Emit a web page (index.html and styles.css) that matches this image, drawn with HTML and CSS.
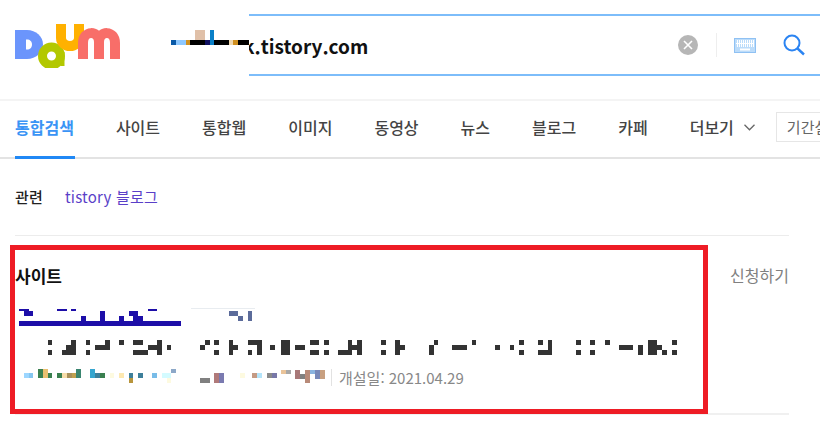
FILE: index.html
```html
<!DOCTYPE html>
<html lang="ko">
<head>
    <meta charset="UTF-8">
    <title>k.tistory.com - Daum 검색</title>
    <link rel="stylesheet" href="styles.css">
</head>
<body>
    <!-- 상단 검색 영역 -->
    <header class="top-bar">
        <svg class="logo" width="107" height="44" viewBox="14 24 107 44">
            <path d="M15 30h12c9 0 16 6.500 16 14.500S36 59 27 59H15z" fill="#6b95fc"/>
            <path d="M26 39.500h1c3 0 5 2 5 5s-2 5-5 5h-1z" fill="#fff"/>
            <circle cx="51.500" cy="56" r="9" fill="none" stroke="#b3c800" stroke-width="9"/>
            <path d="M62.500 52v14" stroke="#b3c800" stroke-width="4"/>
            <path d="M61 24v14a9 8 0 0 0 18 0V24" fill="none" stroke="#ffb100" stroke-width="10"/>
            <path d="M83 59V43c0-13 16-13 16-1v17M99 42c0-12 16-12 16 1v16" fill="none" stroke="#f86e69" stroke-width="10"/>
        </svg>
        <svg class="top-mosaic" width="78" height="16" viewBox="171 30 78 16">
            <rect x="171" y="40" width="5" height="5" fill="#0a5aa8"/>
            <rect x="176" y="40" width="10" height="5" fill="#8ec8ff"/>
            <rect x="186" y="40" width="4" height="5" fill="#d09020"/>
            <rect x="190" y="40" width="15" height="5" fill="#000"/>
            <rect x="195" y="30" width="10" height="10" fill="#e0c0a8"/>
            <rect x="205" y="40" width="5" height="5" fill="#101060"/>
            <rect x="210" y="30" width="4" height="15" fill="#0a80c8"/>
            <rect x="214" y="40" width="15" height="5" fill="#000"/>
            <rect x="229" y="40" width="4" height="5" fill="#f0d8b0"/>
            <rect x="233" y="40" width="5" height="5" fill="#d09020"/>
            <rect x="238" y="40" width="11" height="5" fill="#000"/>
        </svg>
        <div class="search-box">
            <span class="query">k.tistory.com</span>
            <svg class="icon-clear" width="20" height="20" viewBox="0 0 20 20">
                <circle cx="10" cy="10" r="10" fill="#b6b6b6"/>
                <path d="M6 6l8 8M14 6l-8 8" stroke="#fff" stroke-width="1.600"/>
            </svg>
            <span class="search-divider"></span>
            <svg class="icon-keyboard" width="22" height="15" viewBox="0 0 22 15">
                <rect x=".5" y=".5" width="21" height="14" fill="#bcdcfa" stroke="#8fc1f3"/>
                <path d="M3.500 2v7M5.500 2v7M7.500 2v7M9.500 2v7M11.500 2v7M13.500 2v7M15.500 2v7M17.500 2v7M19.500 2v7" stroke="#fff"/>
                <path d="M2 5.500h18" stroke="#fff" stroke-width="1"/>
                <path d="M6 11.500h10" stroke="#fff" stroke-width="2"/>
            </svg>
            <svg class="icon-search" width="22" height="22" viewBox="0 0 22 22">
                <circle cx="9" cy="9" r="7.500" fill="none" stroke="#2b84f2" stroke-width="2"/>
                <path d="M14.500 14.500l6.500 6" stroke="#2b84f2" stroke-width="2.400"/>
            </svg>
        </div>
    </header>

    <!-- 메뉴 -->
    <nav class="tabs">
        <a class="tab active" href="#">통합검색</a>
        <a class="tab" href="#">사이트</a>
        <a class="tab" href="#">통합웹</a>
        <a class="tab" href="#">이미지</a>
        <a class="tab" href="#">동영상</a>
        <a class="tab" href="#">뉴스</a>
        <a class="tab" href="#">블로그</a>
        <a class="tab" href="#">카페</a>
        <a class="tab" href="#">더보기
            <svg width="11" height="7" viewBox="0 0 11 7"><path d="M.5 .8l5 5 5-5" fill="none" stroke="#666" stroke-width="1.300"/></svg>
        </a>
        <span class="period">기간설정</span>
    </nav>

    <main class="content">
        <div class="related">
            <strong>관련</strong>
            <a href="#">tistory 블로그</a>
        </div>

        <section class="site-section">
            <div class="section-head">
                <h2>사이트</h2>
                <a href="#">신청하기</a>
            </div>

            <svg class="title-mosaic" width="240" height="19" viewBox="19 308 240 19">
                <path fill="#1d0ea8" d="M19 321h162v5H19zM19 309h10v2H19zM24 311h9v5h-9zM57 309h10v2H57zM71 309h5v2h-5zM81 316h5v5h-5zM100 311h5v10h-5zM119 316h5v5h-5zM129 311h9v5h-9zM133 316h10v5h-10zM148 309h9v2h-9z"/>
                <path fill="#e8ecf0" d="M191 308h64v1h-64z"/>
                <path fill="#5b6b9a" d="M229 311h9v5h-9zM238 316h5v5h-5zM248 311h4v10h-4z"/>
            </svg>

            <svg class="desc-mosaic" width="630" height="15" viewBox="48 340 630 15">
                <path fill="#333" d="M48 340h4v5h-4zM48 350h4v5h-4zM71 340h5v15h-5zM62 350h9v5h-9zM66 345h5v5h-5zM86 340h4v5h-4zM86 350h4v5h-4zM95 345h15v5H95zM105 340h5v5h-5zM119 340h5v5h-5zM133 340h10v5h-10zM133 350h15v5h-15zM157 340h5v15h-5zM148 345h9v5h-9zM167 345h4v5h-4zM200 345h5v5h-5zM205 340h5v5h-5zM214 340h5v5h-5zM214 350h5v5h-5zM229 340h4v5h-4zM229 345h9v5h-9zM229 350h4v5h-4zM248 340h14v5h-14zM248 350h4v5h-4zM257 345h5v10h-5zM270 345h5v5h-5zM281 340h9v15h-9zM295 345h10v5h-10zM310 340h9v5h-9zM310 350h9v5h-9zM324 340h5v5h-5zM324 350h5v5h-5zM338 350h14v5h-14zM348 340h4v10h-4zM352 345h10v5h-10zM357 340h5v5h-5zM357 350h5v5h-5zM381 340h5v5h-5zM381 350h5v5h-5zM395 340h5v15h-5zM400 345h5v5h-5zM429 345h5v10h-5zM434 340h4v5h-4zM452 345h15v5h-15zM472 340h4v5h-4zM495 345h5v5h-5zM510 345h4v5h-4zM519 340h5v5h-5zM519 350h5v5h-5zM538 340h5v5h-5zM538 350h14v5h-14zM548 340h4v10h-4zM576 340h5v5h-5zM576 350h5v5h-5zM590 340h5v5h-5zM590 350h5v5h-5zM605 340h5v5h-5zM619 345h14v5h-14zM638 345h5v10h-5zM648 340h9v15h-9zM657 345h5v5h-5zM662 350h5v5h-5zM672 340h5v5h-5zM672 350h5v5h-5z"/>
            </svg>

            <div class="meta">
                <svg width="305" height="17" viewBox="24 369 305 17">
                    <rect x="24" y="373" width="5" height="5" fill="#9cd6ff"/>
                    <rect x="29" y="373" width="4" height="5" fill="#86c6f0"/>
                    <rect x="38" y="369" width="5" height="9" fill="#3a8050"/>
                    <rect x="43" y="369" width="5" height="9" fill="#eac070"/>
                    <rect x="48" y="373" width="4" height="5" fill="#3a8050"/>
                    <rect x="57" y="373" width="5" height="5" fill="#3a8050"/>
                    <rect x="62" y="373" width="5" height="5" fill="#f6dca8"/>
                    <rect x="67" y="373" width="5" height="5" fill="#a8905a"/>
                    <rect x="72" y="373" width="4" height="5" fill="#c0a050"/>
                    <rect x="76" y="369" width="5" height="9" fill="#3a8570"/>
                    <rect x="90" y="369" width="5" height="9" fill="#36a6d0"/>
                    <rect x="95" y="373" width="5" height="5" fill="#3d7f9a"/>
                    <rect x="100" y="373" width="5" height="5" fill="#3a8050"/>
                    <rect x="110" y="373" width="4" height="5" fill="#fdfae0"/>
                    <rect x="119" y="373" width="5" height="5" fill="#fde8b0"/>
                    <rect x="129" y="373" width="4" height="5" fill="#3d7f9a"/>
                    <rect x="129" y="378" width="4" height="5" fill="#b8953c"/>
                    <rect x="138" y="373" width="5" height="5" fill="#3d7f9a"/>
                    <rect x="152" y="373" width="5" height="5" fill="#78bce8"/>
                    <rect x="162" y="373" width="9" height="5" fill="#d4fbff"/>
                    <rect x="167" y="378" width="4" height="5" fill="#fdfae0"/>
                    <rect x="171" y="369" width="5" height="4" fill="#8ca8c8"/>
                    <rect x="200" y="378" width="10" height="5" fill="#808080"/>
                    <rect x="214" y="373" width="5" height="10" fill="#b07a7a"/>
                    <rect x="219" y="373" width="5" height="10" fill="#7a7ab0"/>
                    <rect x="240" y="373" width="5" height="5" fill="#fdfae0"/>
                    <rect x="252" y="373" width="5" height="5" fill="#c49a84"/>
                    <rect x="257" y="373" width="5" height="5" fill="#b4e4fa"/>
                    <rect x="267" y="373" width="5" height="5" fill="#8a8a8a"/>
                    <rect x="272" y="373" width="5" height="5" fill="#7878a8"/>
                    <rect x="281" y="370" width="5" height="4" fill="#eac49a"/>
                    <rect x="286" y="370" width="5" height="4" fill="#a8a8a8"/>
                    <rect x="295" y="370" width="5" height="9" fill="#a87878"/>
                    <rect x="300" y="374" width="5" height="5" fill="#808080"/>
                    <rect x="305" y="370" width="5" height="13" fill="#b88a78"/>
                    <rect x="310" y="370" width="5" height="4" fill="#8ab4e0"/>
                    <rect x="315" y="370" width="5" height="9" fill="#7888b8"/>
                    <rect x="320" y="370" width="5" height="9" fill="#c8a080"/>
                </svg>
                <span class="meta-divider"></span>
                <span>개설일: 2021.04.29</span>
            </div>
        </section>

        <!-- 빨간 강조 박스 -->
        <div class="highlight"></div>
    </main>
</body>
</html>
```

FILE: styles.css
```css
* {
    margin: 0;
    padding: 0;
    box-sizing: border-box;
}

html, body {
    height: 434px;
    overflow: hidden;
}

body {
    font-family: 'Noto Sans CJK KR', 'Noto Sans', sans-serif;
    color: #333;
    background: #fff;
    position: relative;
}

a {
    color: inherit;
    text-decoration: none;
}

svg {
    display: block;
    flex: none;
}

/* 상단 검색 영역 */
.top-bar {
    height: 101px;
    display: flex;
    align-items: flex-start;
    border-bottom: 2px solid #f4f4f4;
}

.logo {
    margin: 24px 0 0 14px;
}

.top-mosaic {
    margin: 30px 0 0 50px;
}

.search-box {
    flex: 1;
    height: 62px;
    margin-top: 14px;
    border-top: 2px solid #7dbdfa;
    border-bottom: 2px solid #7dbdfa;
    display: flex;
    align-items: center;
    overflow: hidden;
}

.query {
    flex: 1;
    margin-left: -6px;
    margin-top: 1px;
    font-size: 19px;
    font-weight: 700;
    color: #111;
    white-space: nowrap;
}

.icon-clear {
    margin-right: 18px;
}

.search-divider {
    width: 1px;
    height: 24px;
    background: #eee;
    margin-right: 17px;
}

.icon-keyboard {
    margin-right: 27px;
}

.icon-search {
    margin-right: 15px;
}

/* 메뉴 */
.tabs {
    height: 58px;
    display: flex;
    align-items: center;
    padding: 0 0 4px 15px;
    border-bottom: 2px solid #e3e3e3;
    position: relative;
}

.tab {
    font-size: 16px;
    font-weight: 500;
    color: #444;
    margin-right: 42px;
    display: flex;
    align-items: center;
    gap: 10px;
    white-space: nowrap;
}

.tab.active {
    color: #3a94f5;
    font-weight: 700;
}

.tab.active::after {
    content: '';
    position: absolute;
    left: 15px;
    bottom: -2px;
    width: 60px;
    height: 3px;
    background: #2088f5;
}

.tab:nth-child(9) {
    margin-right: 21px;
}

.period {
    flex: none;
    height: 30px;
    width: 80px;
    padding-left: 10px;
    line-height: 28px;
    font-size: 15px;
    color: #666;
    border: 1px solid #e6e6e6;
    white-space: nowrap;
}

/* 본문 */
.content {
    padding: 0 31px 0 15px;
}

.related {
    height: 77px;
    padding-top: 26px;
    display: flex;
    gap: 22px;
    font-size: 15px;
    letter-spacing: .2px;
    line-height: 24px;
    border-bottom: 1px solid #ececec;
}

.related strong {
    font-weight: 500;
    color: #222;
}

.related a {
    color: #5a3fc8;
}

.site-section {
    height: 179px;
    border-bottom: 2px solid #f0f0f0;
    padding-top: 27px;
}

.section-head {
    height: 45px;
    display: flex;
    justify-content: space-between;
    align-items: flex-start;
}

.section-head h2 {
    font-size: 17px;
    font-weight: 700;
    color: #111;
    line-height: 26px;
}

.section-head a {
    font-size: 16px;
    line-height: 24px;
    color: #808080;
}

.title-mosaic {
    margin-left: 4px;
}

.desc-mosaic {
    margin: 13px 0 0 33px;
}

.meta {
    margin: 14px 0 0 9px;
    display: flex;
    align-items: center;
    font-size: 15px;
    color: #888;
    line-height: 17px;
}

.meta-divider {
    width: 1px;
    height: 17px;
    background: #e2e2e2;
    margin: 0 7px 0 2px;
}

.highlight {
    position: absolute;
    left: 10px;
    top: 245px;
    width: 698px;
    height: 169px;
    border: 5px solid #ee1c25;
    pointer-events: none;
}
```
